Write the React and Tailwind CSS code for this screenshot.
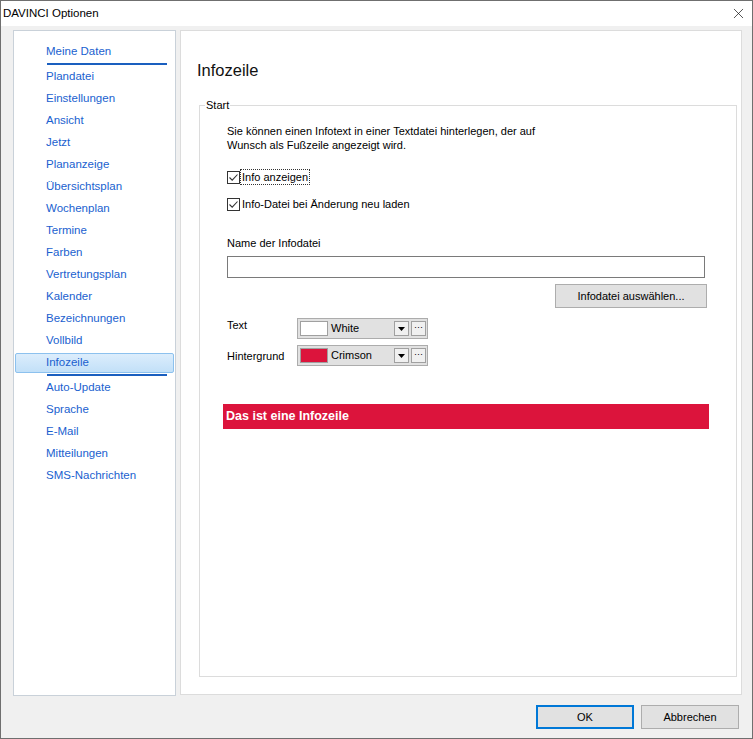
import { X } from 'lucide-react';

const NAV = [
  'Meine Daten',
  'Plandatei',
  'Einstellungen',
  'Ansicht',
  'Jetzt',
  'Plananzeige',
  'Übersichtsplan',
  'Wochenplan',
  'Termine',
  'Farben',
  'Vertretungsplan',
  'Kalender',
  'Bezeichnungen',
  'Vollbild',
  'Infozeile',
  'Auto-Update',
  'Sprache',
  'E-Mail',
  'Mitteilungen',
  'SMS-Nachrichten',
];

const Checkbox = ({ label, focused }) => (
  <label className="flex items-center h-[14px]">
    <span className="w-[13px] h-[13px] border border-[#333] bg-white flex items-center justify-center">
      <svg width="11" height="11" viewBox="0 0 11 11">
        <path d="M1.5 5.5 L4.2 8.2 L9.5 2.5" fill="none" stroke="#333" strokeWidth="1.1" />
      </svg>
    </span>
    <span className={`ml-[1px] px-[1px] leading-[14px] ${focused ? 'outline outline-1 outline-dotted outline-[#333]' : ''}`}>
      {label}
    </span>
  </label>
);

const ColorCombo = ({ color, name }) => (
  <div className="w-[131px] h-[21px] border border-[#acacac] bg-[#e1e1e1] flex items-center pl-[2px] pr-[1px]">
    <span className="w-[28px] h-[15px] border border-[#a0a0a0]" style={{ backgroundColor: color }} />
    <span className="ml-[3px] flex-1 leading-none">{name}</span>
    <span className="w-[15px] h-[15px] border border-[#a0a0a0] bg-[#f0f0f0] flex items-center justify-center">
      <svg width="7" height="4" viewBox="0 0 7 4"><path d="M0 0 H7 L3.5 4 Z" fill="#000" /></svg>
    </span>
    <span className="ml-[2px] w-[15px] h-[15px] border border-[#a0a0a0] bg-[#f0f0f0] flex items-center justify-center text-[9px] leading-none pb-[3px]">
      ···
    </span>
  </div>
);

export default function App() {
  return (
    <div
      className="w-[753px] h-[739px] border border-[#6f6f6f] bg-[#f0f0f0] flex flex-col text-[11px] text-[#000]"
      style={{ fontFamily: '"Liberation Sans", Arial, sans-serif' }}
    >
      {/* title bar */}
      <div className="h-[25px] bg-white flex items-center justify-between pl-[2px] pr-[5px]">
        <span className="text-[11.5px]">DAVINCI Optionen</span>
        <X size={17} strokeWidth={1} className="text-[#111]" />
      </div>

      {/* main */}
      <div className="flex pt-[4px] pl-[12px] pr-[10px] gap-[4px]">
        {/* nav */}
        <div className="w-[163px] h-[666px] border border-[#c9d1d9] bg-white pt-[11px] px-[1px] text-[11.5px]">
          {NAV.map((item) => {
            const selected = item === 'Infozeile';
            const sepAfter = item === 'Meine Daten' || item === 'Infozeile';
            return (
              <div key={item}>
                <div
                  className={`h-[20px] mb-[2px] flex items-center pl-[30px] text-[#1a5fcf] rounded-[2px] ${
                    selected ? 'bg-gradient-to-b from-[#dcedfc] to-[#c2e0f8] border border-[#8cc1ee]' : 'border border-transparent'
                  }`}
                >
                  {item}
                </div>
                {sepAfter && <div className="ml-[32px] w-[120px] h-[2px] bg-[#1a5fbf] -mt-[1px] mb-[2px]" />}
              </div>
            );
          })}
        </div>

        {/* content */}
        <div className="w-[562px] h-[665px] border border-[#dcdcdc] bg-white pt-[28px] pl-[16px] pr-[16px]">
          <div className="text-[16.5px] leading-[22px] text-[#111]">Infozeile</div>

          <fieldset className="mt-[17px] ml-[2px] w-[526px] h-[579px] border border-[#dcdcdc] p-0">
            <legend className="ml-[5px] px-[1px] leading-[14px]">Start</legend>
            <div className="px-[27px] pt-[12px]">
              <p className="leading-[14px]">
                Sie können einen Infotext in einer Textdatei hinterlegen, der auf
                <br />
                Wunsch als Fußzeile angezeigt wird.
              </p>
              <div className="mt-[18px] flex flex-col gap-[13px]">
                <Checkbox label="Info anzeigen" focused />
                <Checkbox label="Info-Datei bei Änderung neu laden" />
              </div>

              <div className="mt-[25px] leading-[14px]">Name der Infodatei</div>
              <div className="mt-[6px] w-[478px] h-[22px] border border-[#7a7a7a] bg-white" />
              <div className="mt-[6px] w-[480px] flex justify-end">
                <button className="w-[152px] h-[24px] border border-[#adadad] bg-[#e1e1e1] leading-none">
                  Infodatei auswählen...
                </button>
              </div>

              <div className="mt-[10px] flex flex-col gap-[6px]">
                <div className="flex items-center">
                  <span className="w-[70px] -mt-[6px]">Text</span>
                  <ColorCombo color="#ffffff" name="White" />
                </div>
                <div className="flex items-center">
                  <span className="w-[70px] mt-[2px]">Hintergrund</span>
                  <ColorCombo color="#dc143c" name="Crimson" />
                </div>
              </div>

              <div className="mt-[38px] -ml-[4px] w-[486px] h-[25px] bg-[#dc143c] flex items-center pl-[3px] text-white font-bold text-[12.5px]">
                Das ist eine Infozeile
              </div>
            </div>
          </fieldset>
        </div>
      </div>

      {/* buttons */}
      <div className="flex justify-end gap-[7px] pr-[13px] mt-[9px]">
        <button className="w-[98px] h-[24px] border-2 border-[#0078d7] bg-[#e1e1e1] leading-none">OK</button>
        <button className="w-[98px] h-[24px] border border-[#adadad] bg-[#e1e1e1] leading-none">Abbrechen</button>
      </div>
    </div>
  );
}
